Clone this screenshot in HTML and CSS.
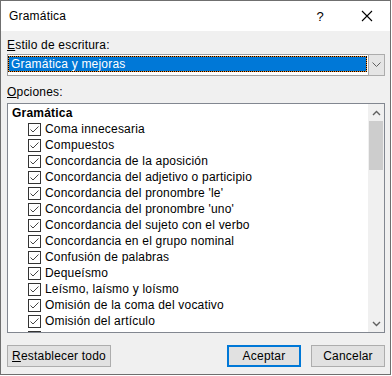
FILE: index.html
```html
<!DOCTYPE html>
<html lang="es">
<head>
  <meta charset="UTF-8">
  <title>Gramática</title>
  <link rel="stylesheet" href="styles.css">
</head>
<body>
  <div class="window">
    <div class="titlebar">
      <span class="title">Gramática</span>
      <span class="help">?</span>
      <svg class="close" width="12" height="12" viewBox="0 0 12 12">
        <path d="M1 1 L11 11 M11 1 L1 11" stroke="#000" stroke-width="1.1" fill="none"/>
      </svg>
    </div>

    <div class="content">
      <div class="label"><u>E</u>stilo de escritura:</div>
      <div class="combo">
        <div class="combo-value"><span class="selected">Gramática y mejoras</span></div>
        <div class="combo-btn">
          <svg width="9" height="6" viewBox="0 0 9 6"><path d="M0.5 0.5 L4.5 4.5 L8.5 0.5" stroke="#606060" fill="none"/></svg>
        </div>
      </div>

      <div class="label label-options"><u>O</u>pciones:</div>
      <div class="listbox">
        <div class="list-items">
          <div class="group">Gramática</div>
          <div class="item"><span class="check"></span>Coma innecesaria</div>
          <div class="item"><span class="check"></span>Compuestos</div>
          <div class="item"><span class="check"></span>Concordancia de la aposición</div>
          <div class="item"><span class="check"></span>Concordancia del adjetivo o participio</div>
          <div class="item"><span class="check"></span>Concordancia del pronombre 'le'</div>
          <div class="item"><span class="check"></span>Concordancia del pronombre 'uno'</div>
          <div class="item"><span class="check"></span>Concordancia del sujeto con el verbo</div>
          <div class="item"><span class="check"></span>Concordancia en el grupo nominal</div>
          <div class="item"><span class="check"></span>Confusión de palabras</div>
          <div class="item"><span class="check"></span>Dequeísmo</div>
          <div class="item"><span class="check"></span>Leísmo, laísmo y loísmo</div>
          <div class="item"><span class="check"></span>Omisión de la coma del vocativo</div>
          <div class="item"><span class="check"></span>Omisión del artículo</div>
          <div class="item"><span class="check"></span></div>
        </div>
        <div class="scrollbar">
          <div class="arrow">
            <svg width="9" height="6" viewBox="0 0 9 6"><path d="M1 5 L4.5 1.5 L8 5" stroke="#606060" stroke-width="1.4" fill="none"/></svg>
          </div>
          <div class="track">
            <div class="thumb"></div>
          </div>
          <div class="arrow">
            <svg width="9" height="6" viewBox="0 0 9 6"><path d="M1 1 L4.5 4.5 L8 1" stroke="#606060" stroke-width="1.4" fill="none"/></svg>
          </div>
        </div>
      </div>

      <div class="actions">
        <button class="btn btn-reset"><u>R</u>establecer todo</button>
        <div class="actions-right">
          <button class="btn btn-default">Aceptar</button>
          <button class="btn">Cancelar</button>
        </div>
      </div>
    </div>
  </div>
</body>
</html>
```

FILE: styles.css
```css
* {
  margin: 0;
  padding: 0;
  box-sizing: border-box;
}

body {
  font-family: 'Liberation Sans', Arial, sans-serif;
  font-size: 12px;
  letter-spacing: 0.2px;
  color: #000;
  background: #fff;
  width: 392px;
  height: 376px;
  overflow: hidden;
}

.window {
  width: 391px;
  height: 375px;
  border: 1px solid #6f6f6f;
  background-color: #f0f0f0;
  display: flex;
  flex-direction: column;
}

.titlebar {
  height: 30px;
  background-color: #fff;
  display: flex;
  align-items: center;
  padding-left: 8px;
}

.title {
  flex: 1;
}

.help {
  font-size: 13px;
  margin-right: 37px;
}

.close {
  margin-right: 17px;
}

.content {
  padding: 0 5px 0 6px;
}

.label {
  line-height: 16px;
  margin-top: 6px;
  margin-bottom: 1px;
}

.label-options {
  margin-top: 8px;
  margin-bottom: 3px;
}

.combo {
  height: 22px;
  border: 1px solid #a0a0a0;
  background-color: #fff;
  display: flex;
}

.combo-value {
  flex: 1;
  padding: 1px 1px 3px 0;
  display: flex;
}

.selected {
  flex: 1;
  height: 16px;
  line-height: 14px;
  padding-left: 2px;
  color: #fff;
  border: 1px dotted #000;
  background: linear-gradient(#0078d7, #0078d7) padding-box, #f08a24 border-box;
}

.combo-btn {
  width: 17px;
  margin: -1px -1px -1px 0;
  background-color: #e5e5e5;
  border: 1px solid #acacac;
  display: flex;
  align-items: center;
  justify-content: center;
}

.listbox {
  height: 230px;
  border: 1px solid #828790;
  background-color: #fff;
  display: flex;
  overflow: hidden;
}

.list-items {
  flex: 1;
  padding-top: 1px;
  overflow: hidden;
}

.group {
  height: 16px;
  line-height: 16px;
  padding-left: 4px;
  font-weight: bold;
}

.item {
  height: 16px;
  line-height: 16px;
  padding-left: 20px;
  display: flex;
  align-items: center;
  white-space: nowrap;
}

.check {
  width: 13px;
  height: 13px;
  margin-right: 4px;
  border: 1px solid #333;
  background: #fff url("data:image/svg+xml,%3Csvg xmlns='http://www.w3.org/2000/svg' width='11' height='11'%3E%3Cpath d='M1.5 5.5 L4 8 L9.5 2.5' stroke='%23444' fill='none'/%3E%3C/svg%3E") no-repeat center;
  flex-shrink: 0;
}

.scrollbar {
  width: 16px;
  background-color: #f0f0f0;
  display: flex;
  flex-direction: column;
}

.arrow {
  height: 17px;
  display: flex;
  align-items: center;
  justify-content: center;
}

.track {
  flex: 1;
}

.thumb {
  height: 49px;
  margin: 0 1px;
  background-color: #cdcdcd;
}

.actions {
  margin-top: 12px;
  display: flex;
  justify-content: space-between;
}

.actions-right {
  display: flex;
  gap: 10px;
}

.btn {
  font-family: inherit;
  font-size: 12px;
  letter-spacing: 0.2px;
  color: #000;
  height: 22px;
  width: 74px;
  background-color: #e1e1e1;
  border: 1px solid #adadad;
}

.btn-reset {
  width: 104px;
}

.btn-default {
  border: 2px solid #0078d7;
}
```
